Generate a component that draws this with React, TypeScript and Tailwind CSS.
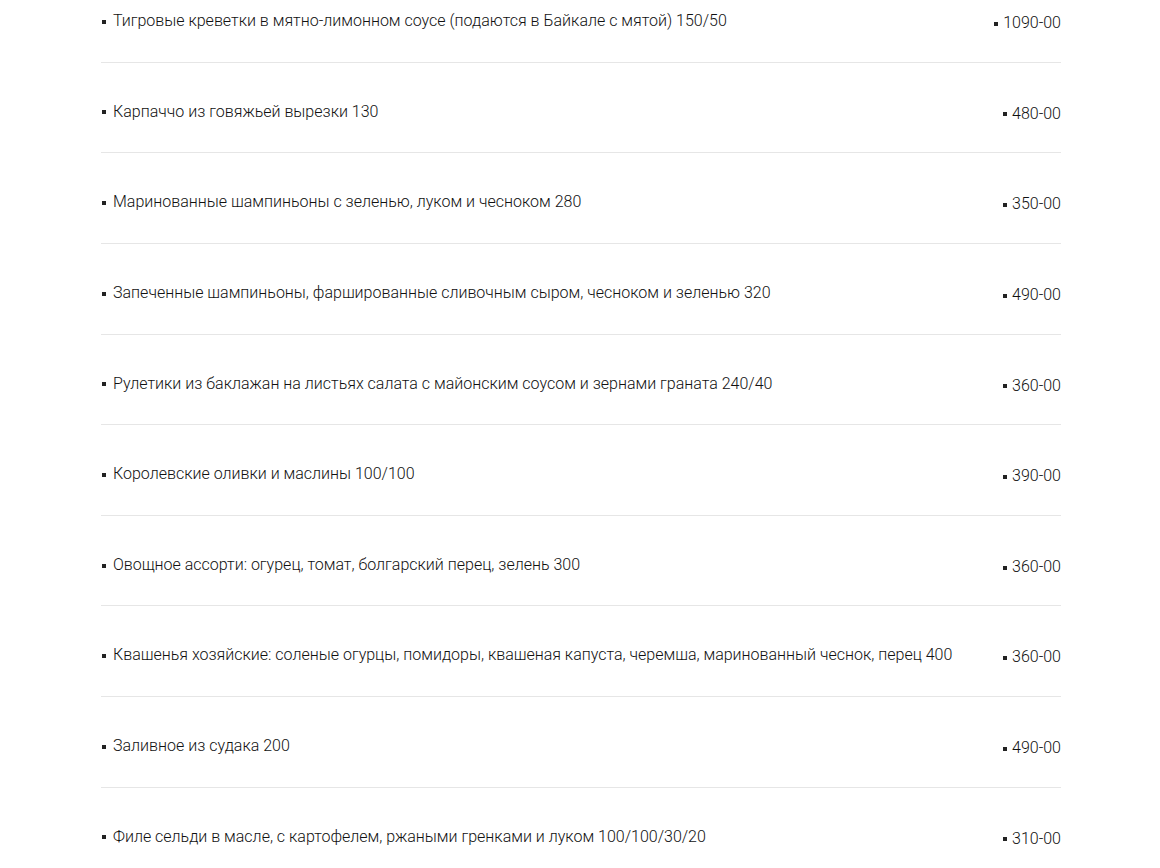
import React from 'react';

const items: { name: string; price: string }[] = [
  { name: 'Тигровые креветки в мятно-лимонном соусе (подаются в Байкале с мятой) 150/50', price: '1090-00' },
  { name: 'Карпаччо из говяжьей вырезки 130', price: '480-00' },
  { name: 'Маринованные шампиньоны с зеленью, луком и чесноком 280', price: '350-00' },
  { name: 'Запеченные шампиньоны, фаршированные сливочным сыром, чесноком и зеленью 320', price: '490-00' },
  { name: 'Рулетики из баклажан на листьях салата с майонским соусом и зернами граната 240/40', price: '360-00' },
  { name: 'Королевские оливки и маслины 100/100', price: '390-00' },
  { name: 'Овощное ассорти: огурец, томат, болгарский перец, зелень 300', price: '360-00' },
  { name: 'Квашенья хозяйские: соленые огурцы, помидоры, квашеная капуста, черемша, маринованный чеснок, перец 400', price: '360-00' },
  { name: 'Заливное из судака 200', price: '490-00' },
  { name: 'Филе сельди в масле, с картофелем, ржаными гренками и луком 100/100/30/20', price: '310-00' },
];

// small square marker before each name / price
const Bullet = ({ gap }: { gap: string }) => (
  <span className={`inline-block w-[4px] h-[4px] bg-[#222] ml-[1px] ${gap} align-middle`} />
);

export default function App() {
  return (
    <div className="h-[868px] overflow-hidden bg-white font-['Roboto',sans-serif] font-light text-[#111]">
      <div className="w-[960px] ml-[101px] -mt-[28px]">
        {items.map((it, i) => (
          <div key={i} className="flex justify-between items-start pt-[38px] pb-[29.625px] border-b border-[#e6e6e6]">
            <div className="text-[16px] leading-[22px] pr-6">
              <Bullet gap="mr-[7px]" />
              {it.name}
            </div>
            <div className="text-[16px] leading-[22px] translate-y-[2px] whitespace-nowrap">
              <Bullet gap="mr-[5px]" />
              {it.price}
            </div>
          </div>
        ))}
      </div>
    </div>
  );
}
